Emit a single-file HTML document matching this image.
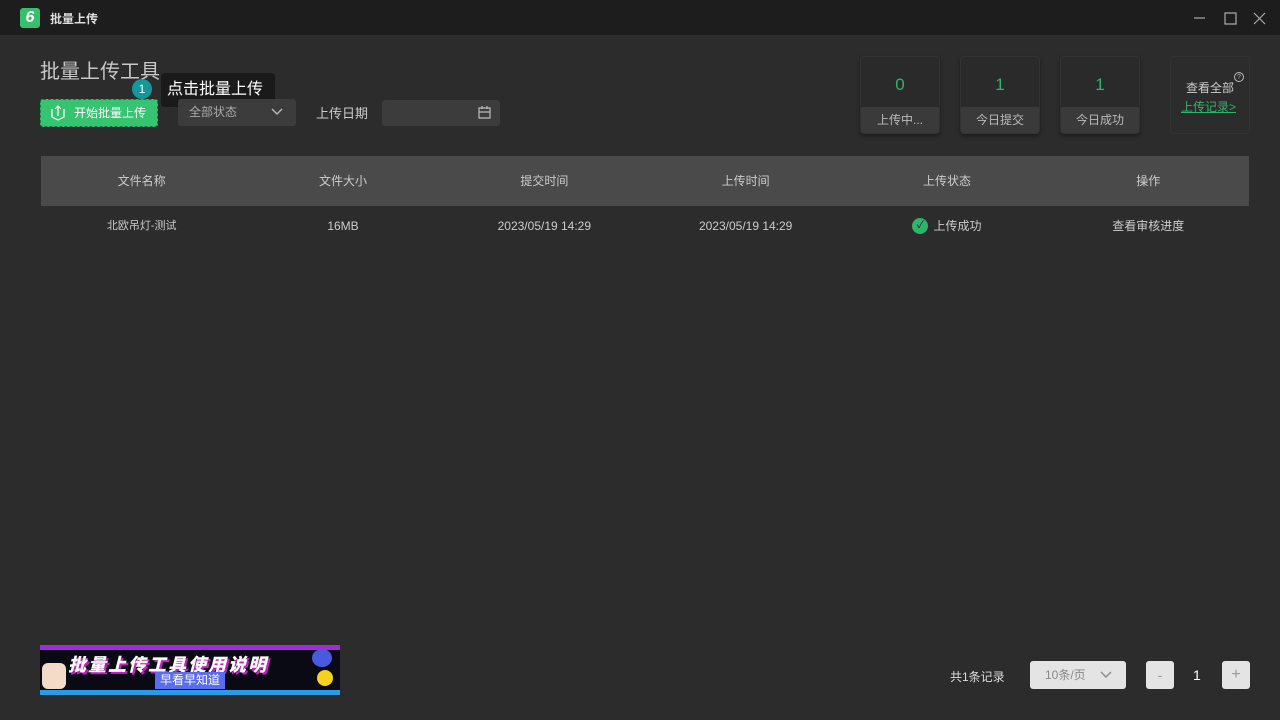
<!DOCTYPE html>
<html><head><meta charset="utf-8"><style>
*{margin:0;padding:0;box-sizing:border-box}
body{width:1280px;height:720px;background:#2c2c2c;font-family:"Liberation Sans","Noto Sans CJK SC",sans-serif;color:#ccc;position:relative;overflow:hidden}
.a{position:absolute}
.tb{left:0;top:0;width:1280px;height:35px;background:#1d1d1d}
.card{width:80px;height:78px;background:#2a2a2a;border:1px solid #333;border-radius:4px;overflow:hidden;box-shadow:0 2px 4px rgba(0,0,0,.4)}
.card .n{height:50px;line-height:56px;text-align:center;color:#2fb46a;font-size:17px}
.card .l{height:27px;background:#3a3a3a;line-height:27px;text-align:center;font-size:12px;color:#bbb}
.th{top:156px;left:41px;width:1208px;height:50px;background:#4a4a4a;display:flex}
.th div,.tr div{flex:1;text-align:center;font-size:12px;color:#ccc;line-height:50px}
.tr{top:201px;left:41px;width:1208px;height:50px;display:flex}
</style></head><body>
<div class="a tb"></div>
<div class="a" style="left:20px;top:8px;width:20px;height:20px;background:#35c06e;border-radius:3px;color:#fff;font-size:16px;font-weight:bold;text-align:center;line-height:20px;font-style:italic">6</div>
<div class="a" style="left:50px;top:10px;font-size:12px;color:#ddd;font-weight:bold">批量上传</div>
<svg class="a" style="left:1190px;top:10px" width="80" height="16" fill="none" stroke="#aaa" stroke-width="1.2"><path d="M4 8h11"/><path d="M35 3h11v11H35z"/><path d="M64 3l11 11M75 3L64 14"/></svg>
<div class="a" style="left:40px;top:55px;font-size:20px;color:#c8c8c8">批量上传工具</div>
<div class="a" style="left:40px;top:99px;width:118px;height:28px;background:#36c470;border-radius:3px;border:1px dashed #1e7a44;color:#fff;font-size:12px;line-height:26px;padding-left:33px">开始批量上传</div>
<svg class="a" style="left:49px;top:104px" width="18" height="18" fill="none" stroke="#fff" stroke-width="1.2"><path d="M3 5v8l6 3 6-3V5"/><path d="M9 12V2M6 5l3-3 3 3"/></svg>
<div class="a" style="left:161px;top:73px;width:114px;height:34px;background:#1a1a1a;border-radius:3px;color:#fff;font-size:16px;line-height:34px;padding-left:6px">点击批量上传</div>
<div class="a" style="left:132px;top:79px;width:20px;height:20px;border-radius:50%;background:#14969a;color:#fff;font-size:12px;text-align:center;line-height:20px">1</div>
<div class="a" style="left:178px;top:99px;width:118px;height:27px;background:#3c3c3c;border-radius:3px;font-size:12px;line-height:27px;padding-left:11px;color:#aaa">全部状态</div>
<svg class="a" style="left:271px;top:107px" width="12" height="10" fill="none" stroke="#bbb" stroke-width="1.4"><path d="M1 2l5 5 5-5"/></svg>
<div class="a" style="left:316px;top:103px;font-size:13px;color:#ccc">上传日期</div>
<div class="a" style="left:382px;top:100px;width:118px;height:26px;background:#3c3c3c;border-radius:3px"></div>
<svg class="a" style="left:478px;top:106px" width="13" height="13" fill="none" stroke="#bbb" stroke-width="1.2"><path d="M1 2h11v10H1zM1 6h11M4 0v3M9 0v3"/></svg>
<div class="a card" style="left:860px;top:56px"><div class="n">0</div><div class="l">上传中...</div></div>
<div class="a card" style="left:960px;top:56px"><div class="n">1</div><div class="l">今日提交</div></div>
<div class="a card" style="left:1060px;top:56px"><div class="n">1</div><div class="l">今日成功</div></div>
<div class="a" style="left:1170px;top:56px;width:80px;height:78px;border:1px solid #333;border-radius:4px"></div>
<div class="a" style="left:1186px;top:79px;font-size:12px;color:#ccc">查看全部</div>
<div class="a" style="left:1234px;top:72px;width:10px;height:10px;border:1px solid #bbb;border-radius:50%;font-size:7px;text-align:center;line-height:9px;color:#bbb">?</div>
<div class="a" style="left:1181px;top:98px;font-size:12px;color:#2fb46a;text-decoration:underline">上传记录&gt;</div>
<div class="a th"><div>文件名称</div><div>文件大小</div><div>提交时间</div><div>上传时间</div><div>上传状态</div><div>操作</div></div>
<div class="a tr"><div style="font-size:11px">北欧吊灯-测试</div><div>16MB</div><div>2023/05/19 14:29</div><div>2023/05/19 14:29</div><div><span style="display:inline-block;width:16px;height:16px;border-radius:50%;background:#2fb46a;color:#222;font-size:10px;line-height:16px;vertical-align:middle;margin-right:5px;position:relative;top:-1px">✓</span>上传成功</div><div>查看审核进度</div></div>
<div class="a" style="left:40px;top:645px;width:300px;height:50px;background:linear-gradient(#a02bd8 0 5px,#0a0a14 5px 45px,#2a9be8 45px);overflow:hidden">
<div class="a" style="left:28px;top:6px;font-size:18px;font-weight:900;color:#fff;font-style:italic;text-shadow:2px 2px #c020c0;letter-spacing:2px;white-space:nowrap">批量上传工具使用说明</div>
<div class="a" style="left:115px;top:27px;width:70px;height:17px;background:#5a6df0;color:#fff;font-size:12px;text-align:center;line-height:17px">早看早知道</div>
<div class="a" style="left:2px;top:18px;width:24px;height:26px;background:#f3dbc8;border-radius:6px"></div>
<div class="a" style="left:277px;top:25px;width:16px;height:16px;background:#f5d21c;border-radius:50%"></div>
<div class="a" style="left:272px;top:4px;width:20px;height:18px;background:#4a5ae0;border-radius:50%"></div>
</div>
<div class="a" style="left:950px;top:668px;font-size:12px;color:#ddd">共1条记录</div>
<div class="a" style="left:1030px;top:661px;width:96px;height:28px;background:#e4e4e4;border-radius:3px;font-size:12px;color:#888;line-height:28px;padding-left:15px">10条/页</div>
<svg class="a" style="left:1100px;top:670px" width="12" height="10" fill="none" stroke="#888" stroke-width="1.4"><path d="M1 2l5 5 5-5"/></svg>
<div class="a" style="left:1146px;top:661px;width:28px;height:28px;background:#e4e4e4;border-radius:3px;color:#999;text-align:center;line-height:28px;font-size:14px">-</div>
<div class="a" style="left:1193px;top:667px;font-size:14px;color:#fff">1</div>
<div class="a" style="left:1222px;top:661px;width:28px;height:28px;background:#e4e4e4;border-radius:3px;color:#999;text-align:center;line-height:28px;font-size:16px">+</div>
</body></html>
